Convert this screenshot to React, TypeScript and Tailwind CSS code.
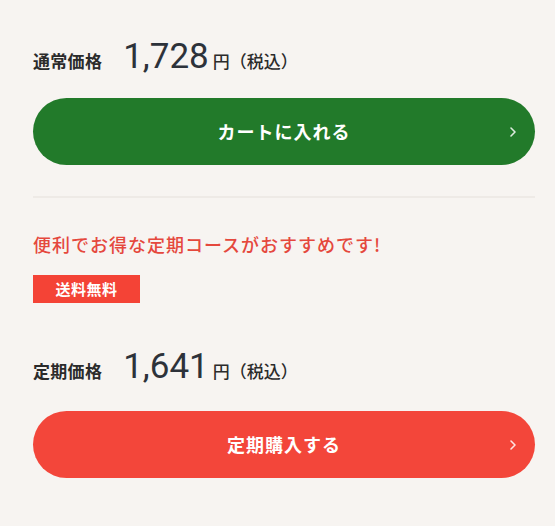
import React from "react";

const jp = { fontFamily: '"Noto Sans CJK JP", "Noto Sans", sans-serif' };
const num = { fontFamily: 'Roboto, "Noto Sans", sans-serif' };

function Chevron() {
  return (
    <svg width="8" height="12" viewBox="0 0 8 12" className="absolute right-[18px] top-1/2 -translate-y-1/2">
      <path d="M2 2 L6 6 L2 10" fill="none" stroke="rgba(255,255,255,0.85)" strokeWidth="1.6" strokeLinecap="round" strokeLinejoin="round" />
    </svg>
  );
}

function PriceRow({ label, price }: { label: string; price: string }) {
  return (
    <div className="flex items-baseline text-[#2b2b2b]" style={jp}>
      <span className="text-[17px] font-bold tracking-[0.3px]">{label}</span>
      <span className="ml-[21px] text-[35px] leading-none font-normal text-[#2d323a]" style={num}>{price}</span>
      <span className="ml-[4px] text-[17px] font-medium">円</span>
      <span className="text-[17px] font-medium">（税込）</span>
    </div>
  );
}

export default function App() {
  return (
    <div className="min-h-[526px] w-[555px] bg-[#f7f4f1] pl-[33px] pr-[20px] pt-[39px]" style={jp}>
      <PriceRow label="通常価格" price="1,728" />
      <button className="relative mt-[24px] flex h-[67px] w-full items-center justify-center rounded-full bg-[#227a2a] text-[18px] font-bold text-white tracking-[1px]" style={jp}>
        カートに入れる
        <Chevron />
      </button>
      <div className="mt-[31px] h-[2px] w-full bg-[#eeeae6]" />
      <p className="mt-[33px] text-[18px] font-medium leading-[26px] text-[#e5483d] tracking-[1px]">便利でお得な定期コースがおすすめです!</p>
      <div className="mt-[18px] flex h-[28px] w-[107px] items-center justify-center bg-[#f44336] text-[15px] font-bold text-white tracking-[0.5px]">送料無料</div>
      <div className="mt-[46px]">
        <PriceRow label="定期価格" price="1,641" />
      </div>
      <button className="relative mt-[27px] flex h-[67px] w-full items-center justify-center rounded-full bg-[#f3463a] text-[18px] font-bold text-white tracking-[1px]" style={jp}>
        定期購入する
        <Chevron />
      </button>
    </div>
  );
}
